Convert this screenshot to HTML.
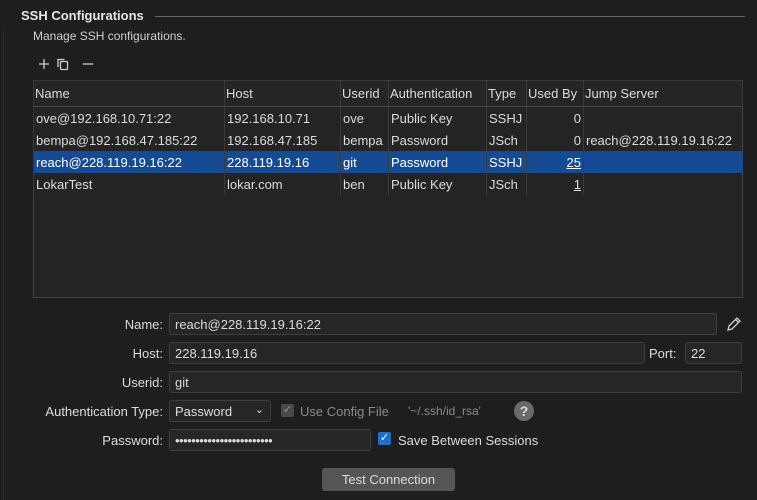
<!DOCTYPE html><html><head><style>
body{margin:0;width:757px;height:500px;background:#1e1e1e;font-family:"Liberation Sans",sans-serif;font-size:13px;color:#dcdcdc;position:relative;overflow:hidden}
.a{position:absolute;white-space:nowrap}
.vl{position:absolute;left:3px;top:28px;width:1px;height:472px;background:#2c2c2c}
table{position:absolute;left:33px;top:80px;border-collapse:collapse;font-size:13px;table-layout:fixed;width:709px}
td{padding:0 0 0 2px;height:22px;white-space:nowrap;overflow:hidden;border-left:1px solid #3a3a3a}
th{font-weight:normal;text-align:left;padding:0 0 0 1px;height:25px;border:1px solid #3a3a3a;border-bottom:1px solid #484848;background:#252525;overflow:hidden;white-space:nowrap}
.tb{position:absolute;left:33px;top:80px;width:708px;height:216px;background:#242424;border:1px solid #444}
.sel td{background:#154a94;color:#fff}
.in{position:absolute;height:22px;background:#262626;border:1px solid #3e3e3e;border-radius:3px;box-sizing:border-box;padding:3px 0 0 5px}
.lb{position:absolute;text-align:right;width:163px;left:0}
.r{text-align:right;padding-right:2px}
</style></head><body>
<div class="vl"></div>
<div class="a" style="left:21px;top:8px;font-weight:bold;font-size:13px;color:#e6e6e6">SSH Configurations</div>
<div class="a" style="left:155px;top:16px;width:590px;height:1px;background:#666"></div>
<div class="a" style="left:33px;top:29px;font-size:12px;color:#cfcfcf">Manage SSH configurations.</div>
<svg class="a" style="left:36px;top:56px" width="62" height="16" fill="none" stroke="#cfcfcf" stroke-width="1.3"><path d="M8 3v10M3 8h10"/><rect x="24.5" y="5.5" width="7" height="8" rx="1"/><path d="M22 11V3.5h6.5"/><path d="M47 8h10"/></svg>
<div class="tb"></div>
<table>
<colgroup><col style="width:191px"><col style="width:116px"><col style="width:48px"><col style="width:98px"><col style="width:40px"><col style="width:57px"><col style="width:159px"></colgroup>
<tr><th>Name</th><th>Host</th><th>Userid</th><th>Authentication</th><th>Type</th><th>Used By</th><th>Jump Server</th></tr>
<tr><td>ove@192.168.10.71:22</td><td>192.168.10.71</td><td>ove</td><td>Public Key</td><td>SSHJ</td><td class="r">0</td><td></td></tr>
<tr><td>bempa@192.168.47.185:22</td><td>192.168.47.185</td><td>bempa</td><td>Password</td><td>JSch</td><td class="r">0</td><td>reach@228.119.19.16:22</td></tr>
<tr class="sel"><td>reach@228.119.19.16:22</td><td>228.119.19.16</td><td>git</td><td>Password</td><td>SSHJ</td><td class="r"><u>25</u></td><td></td></tr>
<tr><td>LokarTest</td><td>lokar.com</td><td>ben</td><td>Public Key</td><td>JSch</td><td class="r"><u>1</u></td><td></td></tr>
</table>
<div class="a lb" style="top:317px">Name:</div>
<div class="in" style="left:169px;top:313px;width:548px">reach@228.119.19.16:22</div>
<svg class="a" style="left:724px;top:315px" width="18" height="18" fill="none" stroke="#cfcfcf" stroke-width="1.3"><path d="M4 15l1-4 8-8 3 3-8 8z M11.5 4.5l3 3"/></svg>
<div class="a lb" style="top:346px">Host:</div>
<div class="in" style="left:169px;top:342px;width:476px">228.119.19.16</div>
<div class="a" style="left:649px;top:346px">Port:</div>
<div class="in" style="left:685px;top:342px;width:57px">22</div>
<div class="a lb" style="top:375px">Userid:</div>
<div class="in" style="left:169px;top:371px;width:573px">git</div>
<div class="a lb" style="top:404px">Authentication Type:</div>
<div class="in" style="left:169px;top:400px;width:102px">Password<span style="position:absolute;right:6px;top:2px;font-size:11px">&#8964;</span></div>
<div class="a" style="left:281px;top:404px;width:13px;height:13px;background:#4a4a4a;border-radius:2px;color:#999;font-size:11px;text-align:center;line-height:13px">✓</div>
<div class="a" style="left:300px;top:404px;color:#8a8a8a">Use Config File</div>
<div class="a" style="left:408px;top:404px;color:#8a8a8a;font-size:12px">'~/.ssh/id_rsa'</div>
<div class="a" style="left:514px;top:401px;width:20px;height:20px;border-radius:50%;background:#6a6a6a;color:#ddd;font-weight:bold;text-align:center;line-height:20px;font-size:14px">?</div>
<div class="a lb" style="top:433px">Password:</div>
<div class="in" style="left:169px;top:429px;width:202px;letter-spacing:-0.5px">••••••••••••••••••••••••</div>
<div class="a" style="left:378px;top:432px;width:13px;height:13px;background:#1f6fd0;border-radius:2px;color:#fff;font-size:11px;text-align:center;line-height:13px">✓</div>
<div class="a" style="left:398px;top:433px">Save Between Sessions</div>
<div class="a" style="left:322px;top:468px;width:133px;height:23px;background:#555;border-radius:3px;text-align:center;line-height:23px">Test Connection</div>
</body></html>
